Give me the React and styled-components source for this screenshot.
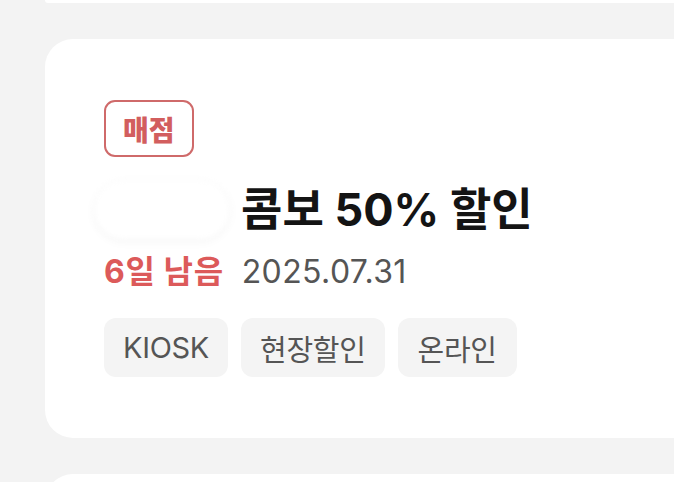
import React from 'react'
import styled, { createGlobalStyle } from 'styled-components'

const GlobalStyle = createGlobalStyle`
  html, body {
    margin: 0;
    padding: 0;
    background: #f3f3f3;
    overflow: hidden;
  }
  body {
    font-family: Inter, 'Noto Sans CJK KR', sans-serif;
  }
`

const Page = styled.div`
  display: flex;
  flex-direction: column;
  gap: 36px;
  padding-left: 45px;
  width: 674px;
  height: 482px;
  box-sizing: border-box;
  overflow: hidden;
`

const Card = styled.div`
  background: #fff;
  margin-right: -60px;
  border-radius: 28px;
  flex-shrink: 0;
`

const PrevCard = styled(Card)`
  height: 3px;
  border-radius: 0 0 6px 6px;
`

const NextCard = styled(Card)`
  height: 60px;
`

const CouponCard = styled(Card)`
  padding: 61px 0 61px 59px;
  display: flex;
  flex-direction: column;
  align-items: flex-start;
`

const Badge = styled.div`
  box-sizing: border-box;
  height: 57px;
  padding: 0 17px;
  display: flex;
  align-items: center;
  border: 2.5px solid #cf6a6a;
  border-radius: 11px;
  color: #d25e5e;
  font-size: 28px;
  font-weight: 800;
`

const TitleRow = styled.div`
  margin-top: 24px;
  display: flex;
  align-items: center;
  margin-left: -9px;
`

const Covered = styled.span`
  width: 134px;
  height: 58px;
  margin-right: 12px;
  border-radius: 30px;
  background: #fff;
  box-shadow: 0 2px 10px rgba(0, 0, 0, 0.05);
  filter: blur(2px);
`

const Title = styled.h2`
  margin: 0;
  font-size: 45px;
  font-weight: 700;
  line-height: 58px;
  color: #141414;
  letter-spacing: 0;
`

const MetaRow = styled.div`
  margin-top: 12px;
  display: flex;
  align-items: baseline;
  gap: 18px;
  line-height: 42px;
`

const Remaining = styled.span`
  color: #dc5a5a;
  font-size: 32px;
  font-weight: 700;
  letter-spacing: 0.6px;
`

const DateText = styled.span`
  color: #555;
  font-size: 32px;
  font-weight: 400;
  letter-spacing: 0.4px;
`

const Tags = styled.div`
  margin-top: 25px;
  display: flex;
  gap: 13px;
`

const Tag = styled.span`
  box-sizing: border-box;
  height: 59px;
  padding: 0 ${p => p.$pad || 18}px;
  display: flex;
  align-items: center;
  background: #f4f4f4;
  border-radius: 12px;
  color: #555;
  font-size: 29px;
  letter-spacing: -0.3px;
`

const tags = [
  { label: 'KIOSK', pad: 19 },
  { label: '현장할인', pad: 19 },
  { label: '온라인', pad: 20 }
]

const App = () => {
  return (
    <>
      <GlobalStyle />
      <Page>
        <PrevCard />
        <CouponCard>
          <Badge>매점</Badge>
          <TitleRow>
            <Covered />
            <Title>콤보 50% 할인</Title>
          </TitleRow>
          <MetaRow>
            <Remaining>6일 남음</Remaining>
            <DateText>2025.07.31</DateText>
          </MetaRow>
          <Tags>
            {tags.map(t => (
              <Tag key={t.label} $pad={t.pad}>{t.label}</Tag>
            ))}
          </Tags>
        </CouponCard>
        <NextCard />
      </Page>
    </>
  )
}

export default App
